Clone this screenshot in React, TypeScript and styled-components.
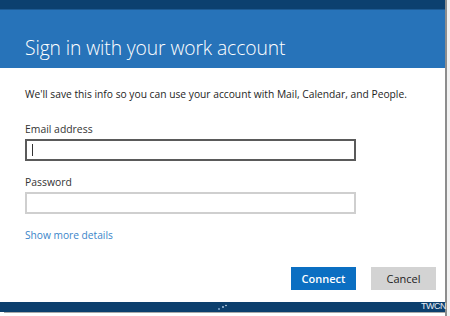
import React from "react";
import styled, { createGlobalStyle } from "styled-components";

const Global = createGlobalStyle`
  html, body { margin: 0; padding: 0; background: #ffffff; }
  body { font-family: "Open Sans", "Noto Sans", sans-serif; }
`;

const Page = styled.div`
  position: relative;
  width: 450px;
  height: 316px;
  display: flex;
  overflow: hidden;
  background: #ffffff;
`;

const Main = styled.div`
  width: 445px;
  display: flex;
  flex-direction: column;
`;

const Edge = styled.div`
  width: 3px;
  border-left: 2px solid #8d8d8d;
  background: #f2f2f2;
`;

const TopBar = styled.div`
  height: 9px;
  background: #0c406f;
  border-bottom: 1px solid #1d5a93;
`;

const Header = styled.div`
  height: 58px;
  box-sizing: border-box;
  background: #2773b9;
  display: flex;
  align-items: center;
  padding: 18px 0 0 25px;
`;

const Title = styled.h1`
  margin: 0;
  font-family: "Open Sans", sans-serif;
  font-weight: 300;
  font-size: 19.3px;
  line-height: 24px;
  color: #ffffff;
  letter-spacing: -0.1px;
`;

const Body = styled.div`
  flex: 1;
  display: flex;
  flex-direction: column;
  padding: 19px 0 0 25px;
`;

const Intro = styled.p`
  margin: 0 0 21px;
  font-size: 10.25px;
  color: #1e1e1e;
  line-height: 14px;
`;

const Label = styled.label`
  font-size: 10.4px;
  color: #333333;
  line-height: 14px;
  margin-bottom: 3px;
`;

const Field = styled.div<{ $focused?: boolean }>`
  width: 331px;
  height: 22px;
  box-sizing: border-box;
  border: 2px solid ${(p) => (p.$focused ? "#5a5a5a" : "#cfcfcf")};
  margin-bottom: 14px;
  display: flex;
  align-items: center;
  padding-left: 5px;
`;

const Caret = styled.span`
  width: 1px;
  height: 12px;
  background: #333333;
`;

const MoreLink = styled.a`
  font-size: 10.2px;
  color: #3a85c9;
  line-height: 14px;
  text-decoration: none;
`;

const Actions = styled.div`
  display: flex;
  justify-content: flex-end;
  gap: 15px;
  padding-right: 9px;
  margin-top: 25px;
`;

const Button = styled.button<{ $primary?: boolean }>`
  width: 65px;
  height: 23px;
  border: none;
  padding: 0;
  font-family: "Open Sans", sans-serif;
  font-size: 11px;
  font-weight: ${(p) => (p.$primary ? 600 : 400)};
  color: ${(p) => (p.$primary ? "#ffffff" : "#222222")};
  background: ${(p) => (p.$primary ? "#0b6fc2" : "#d3d3d3")};
`;

const BottomBar = styled.div`
  height: 10px;
  background: #0c3f6d;
  margin-top: auto;
  display: flex;
  justify-content: center;
  align-items: center;
`;

const Shadow = styled.div`
  height: 1px;
  margin-left: 4px;
  background: #a8a8a8;
`;

const Tail = styled.div`
  height: 3px;
`;

const Dots = styled.svg`
  display: block;
`;

const Watermark = styled.span`
  position: absolute;
  right: 4px;
  bottom: 5px;
  font-family: "Liberation Sans", Arial, sans-serif;
  font-size: 9px;
  line-height: 9px;
  color: #e8eef5;
  letter-spacing: -0.5px;
  white-space: nowrap;
`;

export default function App() {
  return (
    <>
      <Global />
      <Page>
        <Main>
          <TopBar />
          <Header>
            <Title>Sign in with your work account</Title>
          </Header>
          <Body>
            <Intro>
              We'll save this info so you can use your account with Mail, Calendar, and People.
            </Intro>
            <Label>Email address</Label>
            <Field $focused>
              <Caret />
            </Field>
            <Label>Password</Label>
            <Field />
            <MoreLink href="#">Show more details</MoreLink>
            <Actions>
              <Button $primary>Connect</Button>
              <Button>Cancel</Button>
            </Actions>
          </Body>
          <BottomBar>
            <Dots width="12" height="6" viewBox="0 0 12 6">
              <circle cx="2" cy="5" r="0.9" fill="#8fb3d6" />
              <circle cx="6" cy="3" r="0.9" fill="#b8cfe6" />
              <circle cx="9" cy="1.5" r="0.8" fill="#d5e2ef" />
            </Dots>
          </BottomBar>
          <Shadow />
          <Tail />
        </Main>
        <Edge />
        <Watermark>TWCN</Watermark>
      </Page>
    </>
  );
}
